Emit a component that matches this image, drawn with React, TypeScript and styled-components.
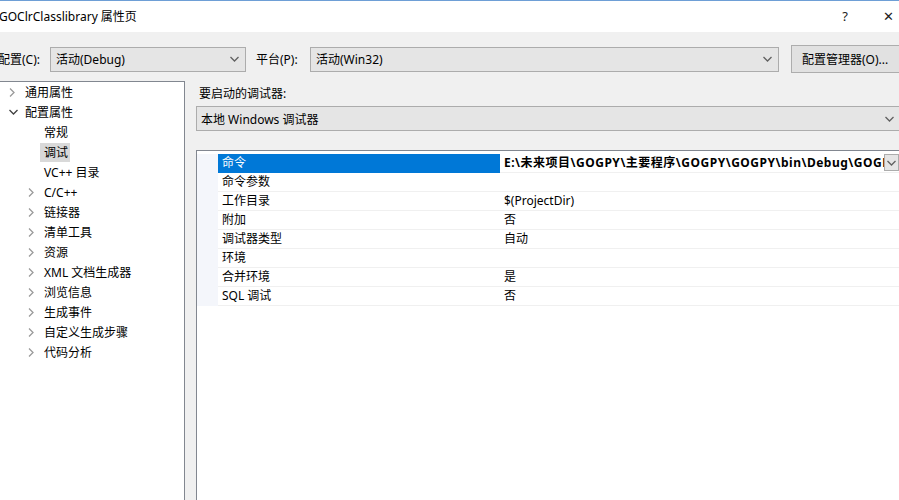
import styled, { createGlobalStyle } from "styled-components";

const GlobalStyle = createGlobalStyle`
  html, body {
    margin: 0;
    padding: 0;
    background: #f0f0f0;
  }
  body {
    font-family: "Noto Sans", "Noto Sans CJK SC", sans-serif;
    font-size: 12px;
    color: #000;
  }
`;

const Window = styled.div`
  width: 899px;
  height: 500px;
  overflow: hidden;
  background: #f0f0f0;
  display: flex;
  flex-direction: column;
`;

const TitleBar = styled.div`
  height: 31px;
  flex: none;
  background: #fff;
  border-top: 1px solid #6e9fd6;
  display: flex;
  align-items: center;
  margin-left: -1px;
`;

const Title = styled.div`
  flex: 1;
  font-size: 12px;
  margin-top: -1px;
`;

const TitleButton = styled.div<{ $w: number }>`
  width: ${p => p.$w}px;
  text-align: center;
  font-size: 13px;
  color: #222;
  margin-top: -1px;
`;

const ConfigBar = styled.div`
  height: 49px;
  box-sizing: border-box;
  padding-top: 5px;
  flex: none;
  display: flex;
  align-items: center;
  margin-left: -2px;
`;

const Label = styled.span<{ $w: number; $gap?: number }>`
  width: ${p => p.$w}px;
  margin-left: ${p => p.$gap ?? 0}px;
  flex: none;
  white-space: nowrap;
`;

const Combo = styled.div<{ $w?: number }>`
  width: ${p => (p.$w ? `${p.$w}px` : "auto")};
  height: 25px;
  box-sizing: border-box;
  flex: none;
  background: #e5e5e5;
  border: 1px solid #acacac;
  display: flex;
  align-items: center;
  padding: 0 6px 0 5px;
  justify-content: space-between;
`;

const Button = styled.div`
  width: 120px;
  height: 28px;
  box-sizing: border-box;
  flex: none;
  margin-left: 12px;
  background: #e1e1e1;
  border: 1px solid #adadad;
  display: flex;
  align-items: center;
  padding-left: 10px;
  white-space: nowrap;
`;

const Body = styled.div`
  flex: 1;
  display: flex;
  min-height: 0;
`;

const Tree = styled.div`
  width: 185px;
  flex: none;
  box-sizing: border-box;
  background: #fff;
  border: 1px solid #828790;
  border-left: none;
  border-bottom: none;
`;

const TreeRow = styled.div<{ $level: number }>`
  height: 20px;
  display: flex;
  align-items: center;
  padding-left: ${p => (p.$level === 0 ? 9 : 28)}px;
`;

const Arrow = styled.span`
  width: 16px;
  height: 20px;
  flex: none;
  display: flex;
  align-items: center;
`;

const TreeText = styled.span<{ $selected?: boolean }>`
  height: 19px;
  line-height: 19px;
  padding-right: 2px;
  margin-left: ${p => (p.$selected ? "-4px" : "0")};
  padding-left: ${p => (p.$selected ? "4px" : "0")};
  background: ${p => (p.$selected ? "#d9d9d9" : "transparent")};
  white-space: nowrap;
`;

const Right = styled.div`
  flex: 1;
  display: flex;
  flex-direction: column;
  padding-left: 11px;
  min-width: 0;
`;

const SectionLabel = styled.div`
  height: 27px;
  display: flex;
  align-items: center;
  padding-left: 3px;
  margin-top: -2px;
`;

const DebuggerCombo = styled(Combo)`
  margin-right: -2px;
  padding-left: 4px;
`;

const Grid = styled.div`
  flex: 1;
  margin-top: 19px;
  background: #fff;
  border-top: 1px solid #828790;
  border-left: 1px solid #828790;
  padding-top: 3px;
`;

const GridRow = styled.div`
  height: 19px;
  display: flex;
`;

const Margin = styled.div`
  width: 21px;
  flex: none;
  background: #f4f6fb;
`;

const NameCell = styled.div<{ $selected?: boolean }>`
  width: 282px;
  flex: none;
  box-sizing: border-box;
  padding-left: 4px;
  line-height: 18px;
  border-bottom: 1px solid ${p => (p.$selected ? "#0078d7" : "#f0f0f0")};
  background: ${p => (p.$selected ? "#0078d7" : "#fff")};
  color: ${p => (p.$selected ? "#fff" : "#000")};
`;

const ValueCell = styled.div<{ $bold?: boolean }>`
  flex: 1;
  min-width: 0;
  box-sizing: border-box;
  padding-left: 4px;
  line-height: 18px;
  border-bottom: 1px solid #f0f0f0;
  font-weight: ${p => (p.$bold ? 700 : 400)};
  letter-spacing: ${p => (p.$bold ? "0.5px" : "0")};
  display: flex;
  white-space: nowrap;
  overflow: hidden;
`;

const ValueText = styled.span`
  flex: 1;
  overflow: hidden;
`;

const DropButton = styled.span`
  width: 15px;
  height: 17px;
  flex: none;
  box-sizing: border-box;
  border: 1px solid #acacac;
  background: #e5e5e5;
  display: flex;
  align-items: center;
  justify-content: center;
`;

const Chevron = ({ dir, color }: { dir: "right" | "down"; color: string }) =>
  dir === "right" ? (
    <svg width="6" height="9" viewBox="0 0 6 9">
      <path d="M1 0.5 L5 4.5 L1 8.5" fill="none" stroke={color} strokeWidth="1.3" />
    </svg>
  ) : (
    <svg width="9" height="6" viewBox="0 0 9 6">
      <path d="M0.5 1 L4.5 5 L8.5 1" fill="none" stroke={color} strokeWidth="1.3" />
    </svg>
  );

const treeItems: { text: string; level: number; arrow?: "right" | "down"; selected?: boolean }[] = [
  { text: "通用属性", level: 0, arrow: "right" },
  { text: "配置属性", level: 0, arrow: "down" },
  { text: "常规", level: 1 },
  { text: "调试", level: 1, selected: true },
  { text: "VC++ 目录", level: 1 },
  { text: "C/C++", level: 1, arrow: "right" },
  { text: "链接器", level: 1, arrow: "right" },
  { text: "清单工具", level: 1, arrow: "right" },
  { text: "资源", level: 1, arrow: "right" },
  { text: "XML 文档生成器", level: 1, arrow: "right" },
  { text: "浏览信息", level: 1, arrow: "right" },
  { text: "生成事件", level: 1, arrow: "right" },
  { text: "自定义生成步骤", level: 1, arrow: "right" },
  { text: "代码分析", level: 1, arrow: "right" },
];

const props: [string, string][] = [
  ["命令", "E:\\未来项目\\GOGPY\\主要程序\\GOGPY\\GOGPY\\bin\\Debug\\GOGPY.exe"],
  ["命令参数", ""],
  ["工作目录", "$(ProjectDir)"],
  ["附加", "否"],
  ["调试器类型", "自动"],
  ["环境", ""],
  ["合并环境", "是"],
  ["SQL 调试", "否"],
];

export default function App() {
  return (
    <Window>
      <GlobalStyle />
      <TitleBar>
        <Title>GOClrClasslibrary 属性页</Title>
        <TitleButton $w={64}>?</TitleButton>
        <TitleButton $w={22}>✕</TitleButton>
      </TitleBar>
      <ConfigBar>
        <Label $w={52}>配置(C):</Label>
        <Combo $w={196}>
          活动(Debug)
          <Chevron dir="down" color="#606060" />
        </Combo>
        <Label $w={54} $gap={10}>平台(P):</Label>
        <Combo $w={469}>
          活动(Win32)
          <Chevron dir="down" color="#606060" />
        </Combo>
        <Button>配置管理器(O)...</Button>
      </ConfigBar>
      <Body>
        <Tree>
          {treeItems.map(item => (
            <TreeRow key={item.text} $level={item.level}>
              <Arrow>
                {item.arrow && (
                  <Chevron dir={item.arrow} color={item.arrow === "down" ? "#404040" : "#9a9a9a"} />
                )}
              </Arrow>
              <TreeText $selected={item.selected}>{item.text}</TreeText>
            </TreeRow>
          ))}
        </Tree>
        <Right>
          <SectionLabel>要启动的调试器:</SectionLabel>
          <DebuggerCombo>
            本地 Windows 调试器
            <Chevron dir="down" color="#606060" />
          </DebuggerCombo>
          <Grid>
            {props.map(([name, value], i) => (
              <GridRow key={name}>
                <Margin />
                <NameCell $selected={i === 0}>{name}</NameCell>
                <ValueCell $bold={i === 0}>
                  <ValueText>{value}</ValueText>
                  {i === 0 && (
                    <DropButton>
                      <Chevron dir="down" color="#606060" />
                    </DropButton>
                  )}
                </ValueCell>
              </GridRow>
            ))}
          </Grid>
        </Right>
      </Body>
    </Window>
  );
}
